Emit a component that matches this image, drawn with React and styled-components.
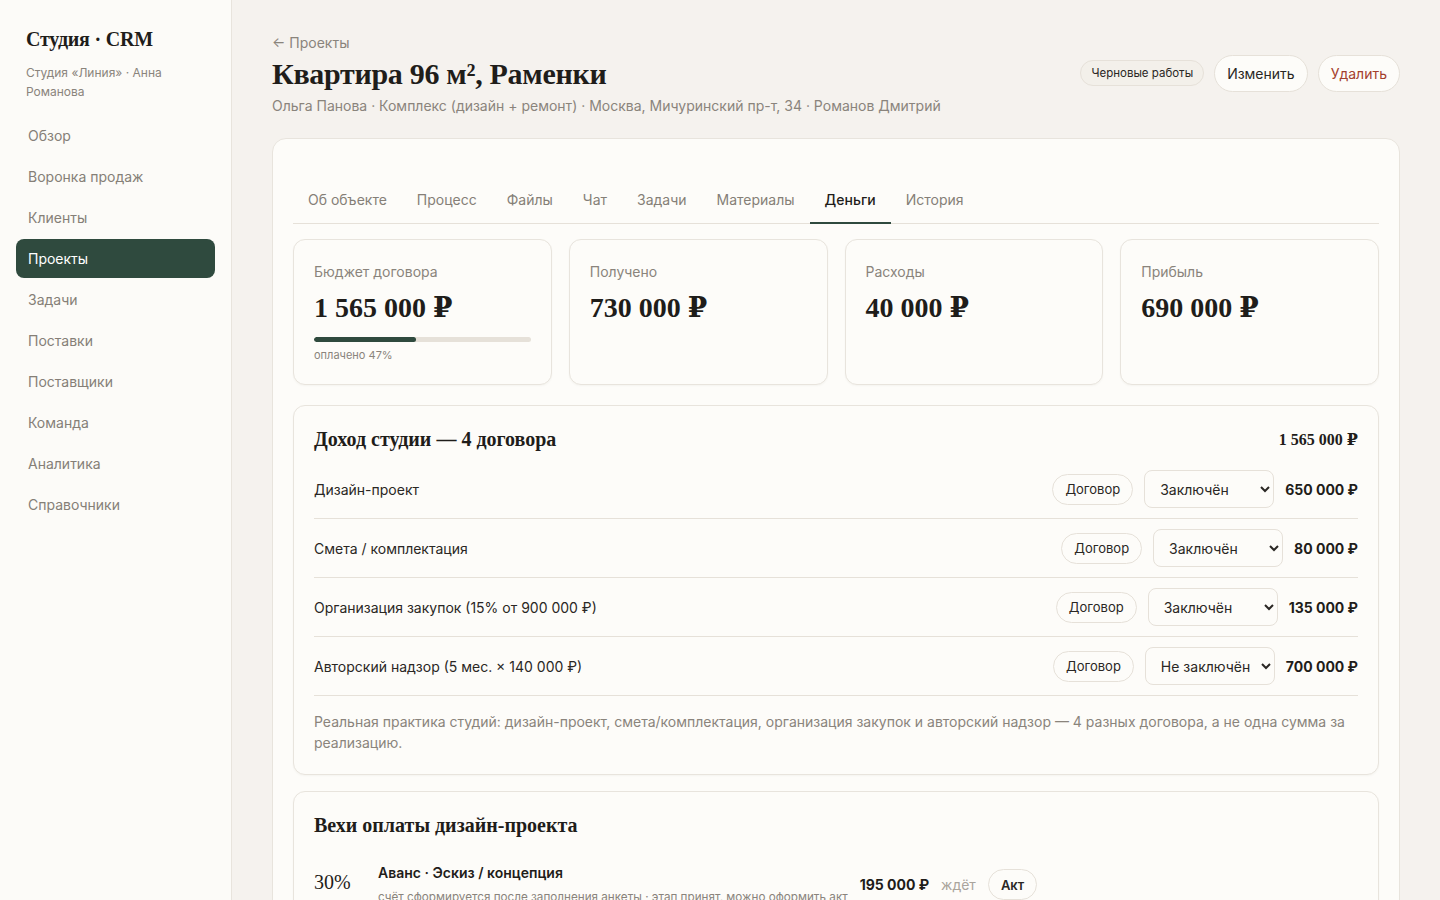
import React from "react";
import styled, { createGlobalStyle } from "styled-components";

const GlobalStyle = createGlobalStyle`
  * { box-sizing: border-box; }
  body {
    margin: 0;
    background: #f5f2ee;
    color: #1f1d1a;
    font-family: Inter, "Noto Sans", sans-serif;
    -webkit-font-smoothing: antialiased;
  }
`;

const serif = `"Liberation Serif", "DejaVu Serif", serif`;

const Layout = styled.div`
  display: grid;
  grid-template-columns: 232px 1fr;
  min-height: 100vh;
`;

const Sidebar = styled.aside`
  background: #fcfbf8;
  border-right: 1px solid #e8e4dd;
  padding: 28px 16px;
  position: sticky;
  top: 0;
  height: 100vh;
`;

const Brand = styled.div`
  padding: 0 10px;
  margin-bottom: 15px;

  h2 {
    margin: 0 0 12px;
    font-family: ${serif};
    font-size: 20px;
    font-weight: 700;
    letter-spacing: -0.2px;
  }

  p {
    margin: 0;
    font-size: 12px;
    line-height: 19px;
    color: #8a847c;
  }
`;

const Nav = styled.nav`
  display: flex;
  flex-direction: column;
  gap: 2px;
`;

const NavItem = styled.a`
  display: flex;
  align-items: center;
  height: 39px;
  padding: 0 12px;
  border-radius: 8px;
  font-size: 14px;
  color: ${(p) => (p.$active ? "#fff" : "#857f77")};
  background: ${(p) => (p.$active ? "#2f4a3e" : "transparent")};
  cursor: pointer;
`;

const Main = styled.main`
  padding: 32px 40px 40px;
`;

const Header = styled.header`
  display: flex;
  align-items: center;
  justify-content: space-between;
  margin-bottom: 24px;
`;

const Back = styled.a`
  font-size: 14px;
  color: #8a847c;
`;

const Title = styled.h1`
  margin: 4px 0 5px;
  font-family: ${serif};
  font-size: 30px;
  line-height: 36px;
  font-weight: 700;
  letter-spacing: -0.3px;
`;

const Meta = styled.div`
  font-size: 14px;
  color: #8a847c;
`;

const Actions = styled.div`
  display: flex;
  align-items: center;
  gap: 10px;
`;

const Badge = styled.span`
  font-size: 11.5px;
  padding: 5px 10px;
  border: 1px solid #e6e1d9;
  border-radius: 999px;
  background: #f3f0ea;
  color: #2a2724;
`;

const PillButton = styled.button`
  height: ${(p) => (p.$small ? "31px" : "37px")};
  padding: 0 12px;
  border: 1px solid #e6e1d9;
  border-radius: 999px;
  background: #fdfcf9;
  font-family: inherit;
  font-size: ${(p) => (p.$small ? "13px" : "14px")};
  font-weight: ${(p) => (p.$bold ? 600 : 400)};
  color: ${(p) => (p.$danger ? "#a4402e" : "#2a2724")};
  cursor: pointer;
  white-space: nowrap;
`;

const Panel = styled.section`
  background: #fdfcf9;
  border: 1px solid #e8e4dd;
  border-radius: 14px;
  padding: 41px 20px 20px;
`;

const Tabs = styled.div`
  display: flex;
  border-bottom: 1px solid #e6e1d9;
  margin-bottom: 15px;
`;

const Tab = styled.div`
  padding: 10px 15px 12px;
  font-size: 14px;
  line-height: 20px;
  color: ${(p) => (p.$active ? "#1f1d1a" : "#857f77")};
  font-weight: ${(p) => (p.$active ? 500 : 400)};
  border-bottom: 2px solid ${(p) => (p.$active ? "#2f4a3e" : "transparent")};
  margin-bottom: -1px;
  cursor: pointer;
`;

const Stats = styled.div`
  display: grid;
  grid-template-columns: repeat(4, 1fr);
  gap: 17px;
  margin-bottom: 20px;
`;

const Card = styled.div`
  background: #fdfcf9;
  border: 1px solid #e8e4dd;
  border-radius: 12px;
  padding: 23px 20px 20px;
  min-height: 146px;
  box-shadow: 0 1px 2px rgba(60, 50, 30, 0.04);
`;

const Label = styled.div`
  font-size: 14px;
  color: #8a847c;
  margin-bottom: 12px;
`;

const BigValue = styled.div`
  font-family: ${serif};
  font-size: 28px;
  line-height: 32px;
  font-weight: 700;
`;

const Track = styled.div`
  height: 5px;
  background: #e6e1d9;
  border-radius: 3px;
  overflow: hidden;
  margin: 13px 0 6px;
`;

const Fill = styled.div`
  height: 100%;
  background: #2f4a3e;
  border-radius: 3px;
`;

const Small = styled.div`
  font-size: 11px;
  color: #8a847c;
`;

const Section = styled(Card)`
  min-height: 0;
  padding: 20px;
  margin-bottom: 16px;
`;

const SectionHead = styled.div`
  display: flex;
  align-items: center;
  justify-content: space-between;
  margin-bottom: 8px;

  h3 {
    margin: 0;
    font-family: ${serif};
    font-size: 20px;
    line-height: 26px;
    font-weight: 700;
  }

  span {
    font-family: ${serif};
    font-size: 16px;
    font-weight: 700;
  }
`;

const Row = styled.div`
  display: flex;
  align-items: center;
  gap: 11px;
  height: 59px;
  border-bottom: 1px solid #e6e1d9;
`;

const RowLabel = styled.div`
  flex: 1;
  font-size: 14px;
  color: #2a2724;
`;

const Select = styled.select`
  width: 130px;
  height: 38px;
  padding: 0 8px 0 11px;
  border: 1px solid #e6e1d9;
  border-radius: 8px;
  background: #fdfcf9;
  font-family: inherit;
  font-size: 14px;
  color: #2a2724;
`;

const Amount = styled.div`
  font-size: 14px;
  font-weight: 700;
  white-space: nowrap;
`;

const Note = styled.p`
  margin: 15px 0 1px;
  font-size: 14px;
  line-height: 21px;
  color: #8a847c;
`;

const Milestone = styled.div`
  display: flex;
  align-items: center;
  gap: 12px;
  padding: 18px 0 14px;
`;

const Percent = styled.div`
  width: 52px;
  font-family: ${serif};
  font-size: 20px;
  margin-bottom: 4px;
`;

const MilestoneInfo = styled.div`
  b {
    display: block;
    font-size: 14px;
    font-weight: 600;
    margin-bottom: 4px;
  }
  span {
    font-size: 11.7px;
    color: #8a847c;
  }
`;

const Muted = styled.span`
  font-size: 14px;
  color: #aaa49c;
`;

const navItems = [
  "Обзор",
  "Воронка продаж",
  "Клиенты",
  "Проекты",
  "Задачи",
  "Поставки",
  "Поставщики",
  "Команда",
  "Аналитика",
  "Справочники",
];

const tabs = [
  "Об объекте",
  "Процесс",
  "Файлы",
  "Чат",
  "Задачи",
  "Материалы",
  "Деньги",
  "История",
];

const contracts = [
  { name: "Дизайн-проект", status: "Заключён", sum: "650 000 ₽" },
  { name: "Смета / комплектация", status: "Заключён", sum: "80 000 ₽" },
  { name: "Организация закупок (15% от 900 000 ₽)", status: "Заключён", sum: "135 000 ₽" },
  { name: "Авторский надзор (5 мес. × 140 000 ₽)", status: "Не заключён", sum: "700 000 ₽" },
];

const milestones = [
  {
    pct: "30%",
    title: "Аванс · Эскиз / концепция",
    note: "счёт сформируется после заполнения анкеты · этап принят, можно оформить акт",
    sum: "195 000 ₽",
  },
  {
    pct: "40%",
    title: "Рабочая документация",
    note: "оплата после согласования чертежей",
    sum: "260 000 ₽",
  },
];

const App = () => {
  return (
    <>
      <GlobalStyle />
      <Layout>
        <Sidebar>
          <Brand>
            <h2>Студия · CRM</h2>
            <p>Студия «Линия» · Анна Романова</p>
          </Brand>
          <Nav>
            {navItems.map((item) => (
              <NavItem key={item} $active={item === "Проекты"}>
                {item}
              </NavItem>
            ))}
          </Nav>
        </Sidebar>

        <Main>
          <Header>
            <div>
              <Back>← Проекты</Back>
              <Title>Квартира 96 м², Раменки</Title>
              <Meta>
                Ольга Панова · Комплекс (дизайн + ремонт) · Москва, Мичуринский пр-т, 34 ·
                Романов Дмитрий
              </Meta>
            </div>
            <Actions>
              <Badge>Черновые работы</Badge>
              <PillButton>Изменить</PillButton>
              <PillButton $danger>Удалить</PillButton>
            </Actions>
          </Header>

          <Panel>
            <Tabs>
              {tabs.map((t) => (
                <Tab key={t} $active={t === "Деньги"}>
                  {t}
                </Tab>
              ))}
            </Tabs>

            <Stats>
              <Card>
                <Label>Бюджет договора</Label>
                <BigValue>1 565 000 ₽</BigValue>
                <Track>
                  <Fill style={{ width: "47%" }} />
                </Track>
                <Small>оплачено 47%</Small>
              </Card>
              <Card>
                <Label>Получено</Label>
                <BigValue>730 000 ₽</BigValue>
              </Card>
              <Card>
                <Label>Расходы</Label>
                <BigValue>40 000 ₽</BigValue>
              </Card>
              <Card>
                <Label>Прибыль</Label>
                <BigValue>690 000 ₽</BigValue>
              </Card>
            </Stats>

            <Section>
              <SectionHead>
                <h3>Доход студии — 4 договора</h3>
                <span>1 565 000 ₽</span>
              </SectionHead>
              {contracts.map((c) => (
                <Row key={c.name}>
                  <RowLabel>{c.name}</RowLabel>
                  <PillButton $small>Договор</PillButton>
                  <Select defaultValue={c.status}>
                    <option>Заключён</option>
                    <option>Не заключён</option>
                  </Select>
                  <Amount>{c.sum}</Amount>
                </Row>
              ))}
              <Note>
                Реальная практика студий: дизайн-проект, смета/комплектация, организация
                закупок и авторский надзор — 4 разных договора, а не одна сумма за реализацию.
              </Note>
            </Section>

            <Section>
              <SectionHead>
                <h3>Вехи оплаты дизайн-проекта</h3>
              </SectionHead>
              {milestones.map((m) => (
                <Milestone key={m.pct}>
                  <Percent>{m.pct}</Percent>
                  <MilestoneInfo>
                    <b>{m.title}</b>
                    <span>{m.note}</span>
                  </MilestoneInfo>
                  <Amount>{m.sum}</Amount>
                  <Muted>ждёт</Muted>
                  <PillButton $small $bold>
                    Акт
                  </PillButton>
                </Milestone>
              ))}
            </Section>
          </Panel>
        </Main>
      </Layout>
    </>
  );
};

export default App;
